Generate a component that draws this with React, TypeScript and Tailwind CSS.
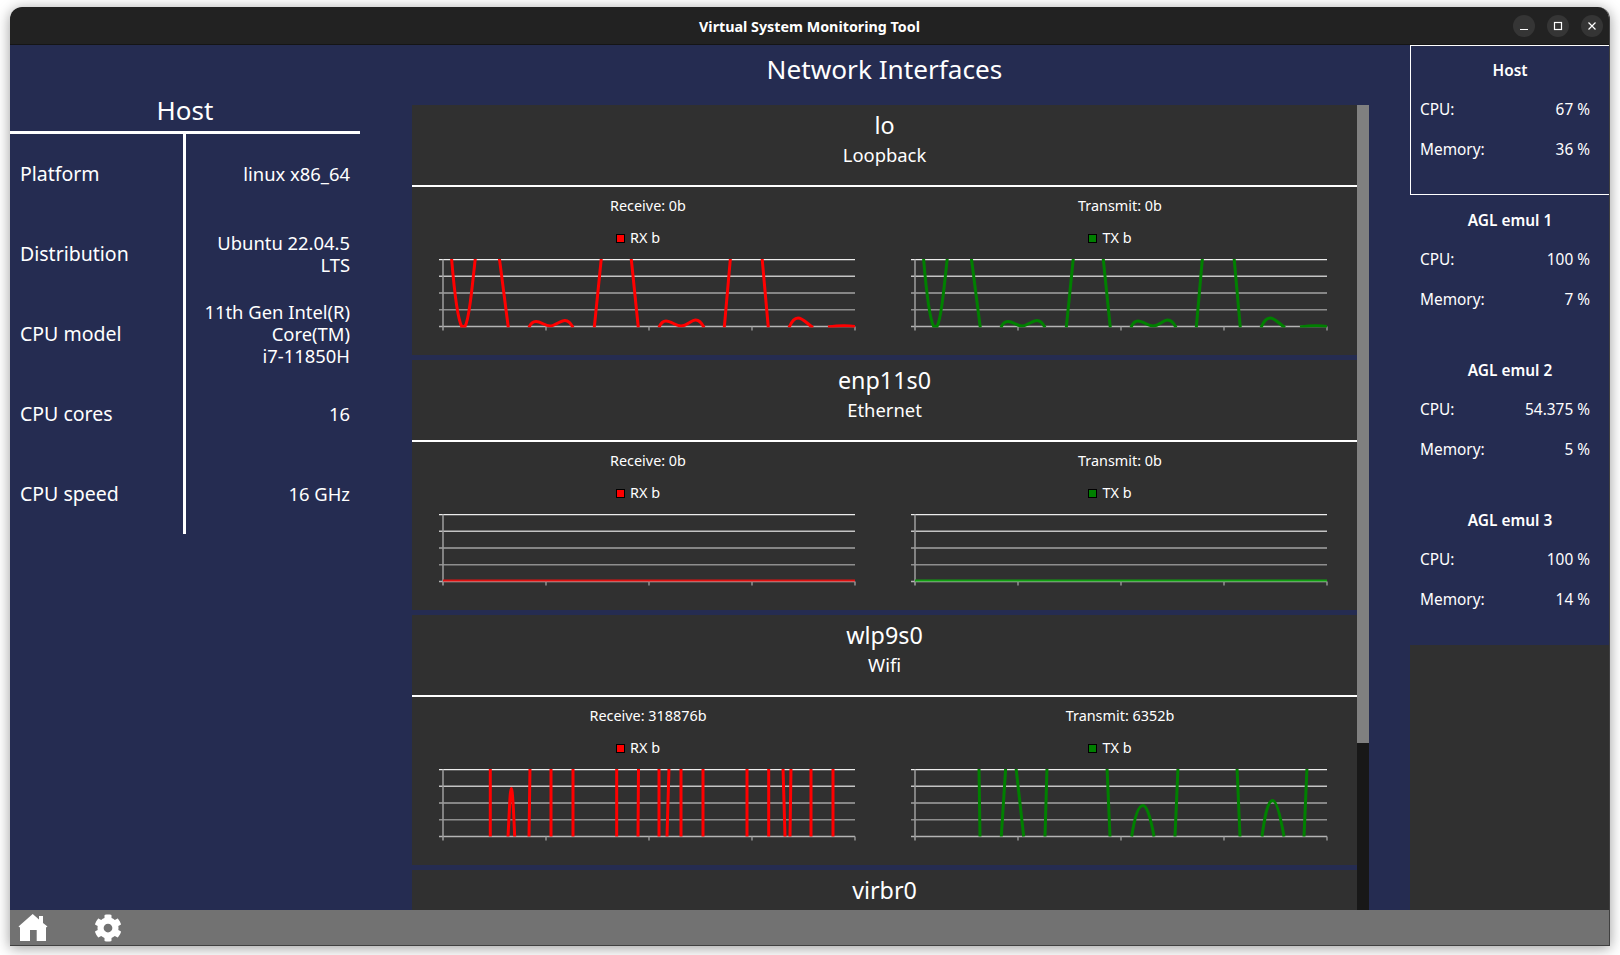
import { FaCog } from "react-icons/fa";

const uiFont = "font-['Noto_Sans',sans-serif]";

const loPath =
  "M8 -8 C11 30 15 60 18.7 67 L22 67 C26 60 29 30 33 -8 M55.5 -8 L65.3 68 M86 68 C88 63 90 62 93 62 C98 62 102 66.5 107 66.5 C112 66.5 117 61 122 61 C126 61 128 64 130 68 M151.3 68 L159 -8 M187.5 -8 L195.3 68 M216 68 C218 63 220 61.5 223 61.5 C228 61.5 233 66.5 238 66.5 C244 66.5 248 60.5 252.7 60.5 C257 60.5 259 64 261 68 M281.3 68 L288 -8 M318.5 -8 L325.3 68 M346 68 C349 61 352 58.5 355 58.5 C360 58.5 365 65 370 68 M385 67.5 Q400 65.5 412 67";

const flat = "M0 66 L412 66";

const wlpRx =
  "M47.3 -2 L47.3 67 M65 67 C66.5 40 67 19 68.3 19 C69.5 19 70.5 40 71.7 67 M87 -2 L86 67 M108 -2 L108 67 M130 -2 L130 67 M173.7 -2 L173.7 67 M195.5 -2 L195 67 M216 -2 L216 67 M226 -2 L224 67 M238 -2 L238 67 M260 -2 L260 67 M304 -2 L304 67 M325.7 -2 L325.7 67 M340 -2 L342 67 M348 -2 L347 67 M368 -2 L368 67 M390 -2 L390 67";

const wlpTx =
  "M64 -2 L65 67 M90.7 -2 L86.3 67 M101 -2 L108.7 67 M132 -2 L130 67 M192 -2 L195 67 M216.7 67 C220 45 224 36 228 36 C232 36 236 50 239 67 M263 -2 L260 67 M322 -2 L325 67 M347 67 C350 45 353 31 357.7 31 C362 31 366 50 369 67 M392 -2 L389 67";

const gridColors = ["#ececec", "#c4c4c4", "#a3a3a3", "#8e8e8e", "#b4b4b4"];

type ChartProps = {
  id: string;
  d: string;
  color: string;
  width: number;
};

function Chart({ id, d, color, width }: ChartProps) {
  return (
    <svg width="418" height="76" className="block">
      <clipPath id={id}>
        <rect x="0" y="-1" width="412" height="69" />
      </clipPath>
      <g transform="translate(4 0.5)">
        {gridColors.map((c, i) => (
          <line key={i} x1="-4" x2="412" y1={i * 16.75} y2={i * 16.75} stroke={c} strokeWidth="1.3" />
        ))}
        <line x1="0" x2="0" y1="0" y2="71" stroke="#999999" strokeWidth="1.6" />
        {[103, 206, 309, 412].map((x) => (
          <line key={x} x1={x} x2={x} y1="67" y2="71" stroke="#999999" strokeWidth="1.4" />
        ))}
        <path d={d} fill="none" stroke={color} strokeWidth={width} clipPath={`url(#${id})`} />
      </g>
    </svg>
  );
}

type GraphProps = {
  id: string;
  title: string;
  legend: string;
  swatch: string;
  d: string;
  color: string;
  width: number;
};

function Graph({ id, title, legend, swatch, d, color, width }: GraphProps) {
  return (
    <div className="flex flex-1 flex-col items-center">
      <div className="mt-[10px] h-[18px] text-[14.4px] leading-[18px] text-white">{title}</div>
      <div className="mt-[14px] flex h-[18px] items-center gap-[5px] pr-[20px] text-[14.4px] text-white">
        <span className="h-[9px] w-[9px] border border-black" style={{ backgroundColor: swatch }} />
        {legend}
      </div>
      <div className="mt-[12px]">
        <Chart id={id} d={d} color={color} width={width} />
      </div>
    </div>
  );
}

type Iface = {
  name: string;
  kind: string;
  rx: string;
  tx: string;
  rxPath: string;
  txPath: string;
  rxColor: string;
  txColor: string;
  width: number;
};

const ifaces: Iface[] = [
  { name: "lo", kind: "Loopback", rx: "0b", tx: "0b", rxPath: loPath, txPath: loPath, rxColor: "#ff0000", txColor: "#008000", width: 3 },
  { name: "enp11s0", kind: "Ethernet", rx: "0b", tx: "0b", rxPath: flat, txPath: flat, rxColor: "#e01010", txColor: "#10a010", width: 2 },
  { name: "wlp9s0", kind: "Wifi", rx: "318876b", tx: "6352b", rxPath: wlpRx, txPath: wlpTx, rxColor: "#ff0000", txColor: "#008000", width: 3 },
];

function IfaceCard({ item }: { item: Iface }) {
  return (
    <div className="flex h-[250px] shrink-0 flex-col bg-[#303030]">
      <div className="flex h-[82px] shrink-0 flex-col items-center border-b-2 border-white pt-[2px] text-white">
        <div className="text-[23.3px] leading-[36px]">{item.name}</div>
        <div className="text-[18.4px] leading-[24px]">{item.kind}</div>
      </div>
      <div className="flex pr-[1px]">
        <Graph id={`${item.name}-rx`} title={`Receive: ${item.rx}`} legend="RX b" swatch="#ff0000" d={item.rxPath} color={item.rxColor} width={item.width} />
        <Graph id={`${item.name}-tx`} title={`Transmit: ${item.tx}`} legend="TX b" swatch="#008000" d={item.txPath} color={item.txColor} width={item.width} />
      </div>
    </div>
  );
}

const hostRows = [
  { label: "Platform", value: ["linux x86_64"] },
  { label: "Distribution", value: ["Ubuntu 22.04.5", "LTS"] },
  { label: "CPU model", value: ["11th Gen Intel(R)", "Core(TM)", "i7-11850H"] },
  { label: "CPU cores", value: ["16"] },
  { label: "CPU speed", value: ["16 GHz"] },
];

const vms = [
  { name: "Host", cpu: "67 %", mem: "36 %", active: true },
  { name: "AGL emul 1", cpu: "100 %", mem: "7 %", active: false },
  { name: "AGL emul 2", cpu: "54.375 %", mem: "5 %", active: false },
  { name: "AGL emul 3", cpu: "100 %", mem: "14 %", active: false },
];

function HostPanel() {
  return (
    <div className="flex w-[350px] shrink-0 flex-col pt-[49px] text-white">
      <div className="h-[40px] border-b-[3px] border-white text-center text-[26px] leading-[33px]">Host</div>
      {hostRows.map((row) => (
        <div key={row.label} className="flex h-[80px] items-center">
          <div className="flex h-full w-[173px] items-center pl-[10px] text-[19.5px]">{row.label}</div>
          <div className="h-full w-[3px] bg-white" />
          <div className="flex-1 pr-[10px] text-right text-[18.4px] leading-[22px]">
            {row.value.map((line) => (
              <div key={line}>{line}</div>
            ))}
          </div>
        </div>
      ))}
    </div>
  );
}

function VmPanel() {
  return (
    <div className="flex w-[200px] shrink-0 flex-col bg-[#303030]">
      {vms.map((vm) => (
        <div
          key={vm.name}
          className={`flex h-[150px] flex-col bg-[#252c51] pl-[9px] pr-[19px] pt-[15px] text-[15.4px] text-white ${
            vm.active ? "border border-white" : "border border-transparent"
          }`}
        >
          <div className="-mr-[10px] text-center font-semibold leading-[20px]">{vm.name}</div>
          <div className="mt-[19px] flex justify-between leading-[20px]">
            <span>CPU:</span>
            <span>{vm.cpu}</span>
          </div>
          <div className="mt-[20px] flex justify-between leading-[20px]">
            <span>Memory:</span>
            <span>{vm.mem}</span>
          </div>
        </div>
      ))}
    </div>
  );
}

function WindowButton({ children }: { children: React.ReactNode }) {
  return (
    <div className="flex h-[22px] w-[22px] items-center justify-center rounded-full bg-[#353535]">
      <svg width="12" height="12" viewBox="0 0 12 12" fill="none" stroke="white" strokeWidth="1.2">
        {children}
      </svg>
    </div>
  );
}

function HomeIcon() {
  return (
    <svg width="30" height="27" viewBox="0 0 30 27" fill="white">
      <path
        fillRule="evenodd"
        d="M14.7 0 L21 5.5 V2 H25 V9 L29.5 12.5 L28 13.5 V27 H18.7 V16 H12 V27 H2 V13.5 L0.5 12.5 Z"
      />
    </svg>
  );
}

export default function App() {
  return (
    <div className={`h-[955px] w-[1620px] overflow-hidden bg-white pl-[10px] pr-[10px] pt-[7px] ${uiFont}`}>
      <div className="flex h-[939px] flex-col overflow-hidden rounded-t-[12px] border-b border-r border-[#404040] shadow-[0_2px_14px_rgba(0,0,0,0.4)]">
        <div className="relative flex h-[38px] shrink-0 items-center justify-center border-b border-[#151515] bg-[#222222] pt-[2px]">
          <div className="text-[14.3px] font-bold text-white">Virtual System Monitoring Tool</div>
          <div className="absolute right-[6px] top-[8px] flex gap-[12px]">
            <WindowButton>
              <path d="M2 9.5h8" />
            </WindowButton>
            <WindowButton>
              <rect x="2.5" y="2.5" width="7" height="7" />
            </WindowButton>
            <WindowButton>
              <path d="M2.5 2.5l7 7M9.5 2.5l-7 7" />
            </WindowButton>
          </div>
        </div>

        <div className="flex min-h-0 flex-1 bg-[#252c51]">
          <HostPanel />
          <div className="ml-[52px] flex w-[957px] shrink-0 flex-col">
            <div className="h-[60px] shrink-0 pr-[12px] text-center text-[26.2px] leading-[49px] text-white">Network Interfaces</div>
            <div className="flex min-h-0 flex-1">
              <div className="flex flex-1 flex-col gap-[5px] overflow-hidden">
                {ifaces.map((item) => (
                  <IfaceCard key={item.name} item={item} />
                ))}
                <div className="h-[50px] shrink-0 bg-[#303030] pt-[2px] text-center text-[23.3px] leading-[36px] text-white">virbr0</div>
              </div>
              <div className="w-[12px] shrink-0 bg-[#181818]">
                <div className="h-[638px] bg-[#808080]" />
              </div>
            </div>
          </div>
          <div className="ml-[41px] flex">
            <VmPanel />
          </div>
        </div>

        <div className="flex h-[35px] shrink-0 items-center gap-[46px] bg-[#727272] pl-[8px] text-white">
          <HomeIcon />
          <FaCog className="h-[28px] w-[28px]" />
        </div>
      </div>
    </div>
  );
}
